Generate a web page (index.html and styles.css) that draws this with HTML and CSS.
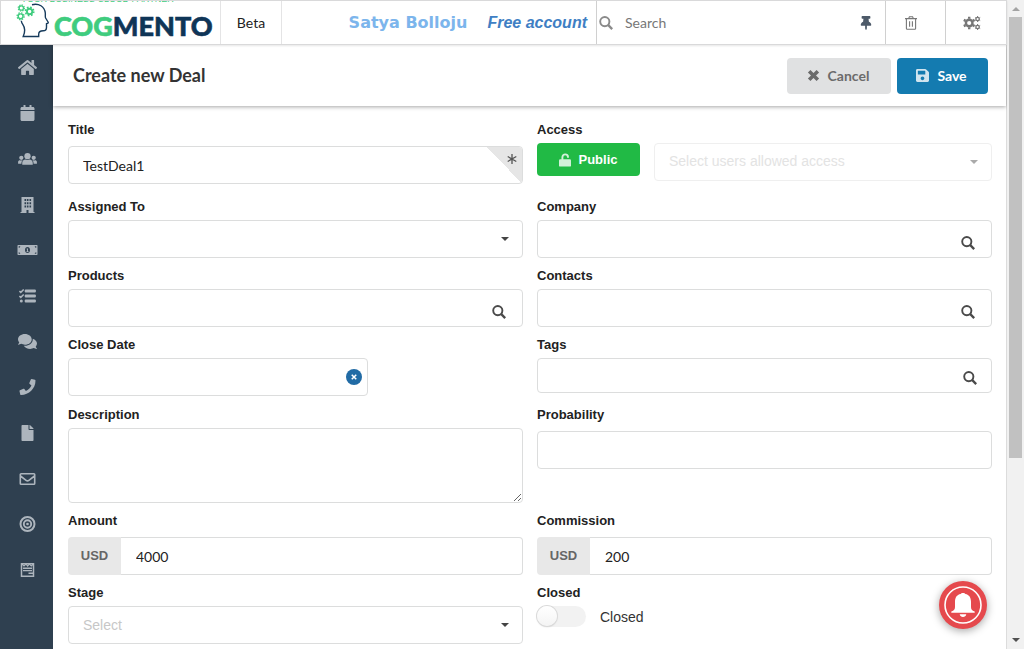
FILE: index.html
```html
<!DOCTYPE html>
<html lang="en">
<head>
<meta charset="utf-8">
<title>Cogmento CRM</title>
<link rel="stylesheet" href="styles.css">
</head>
<body>
<svg class="sprite" aria-hidden="true">
  <symbol id="i-home" viewBox="0 0 576 512"><path d="M280.37 148.26L96 300.11V464a16 16 0 0 0 16 16l112.06-.29a16 16 0 0 0 15.92-16V368a16 16 0 0 1 16-16h64a16 16 0 0 1 16 16v95.64a16 16 0 0 0 16 16.05L464 480a16 16 0 0 0 16-16V300L295.67 148.26a12.19 12.19 0 0 0-15.3 0zM571.6 251.47L488 182.56V44.05a12 12 0 0 0-12-12h-56a12 12 0 0 0-12 12v72.61L318.47 43a48 48 0 0 0-61 0L4.34 251.47a12 12 0 0 0-1.6 16.9l25.5 31A12 12 0 0 0 45.15 301l235.22-193.74a12.19 12.19 0 0 1 15.3 0L530.9 301a12 12 0 0 0 16.9-1.6l25.5-31a12 12 0 0 0-1.7-16.93z"/></symbol>
  <symbol id="i-calendar" viewBox="0 0 448 512"><path d="M12 192h424c6.600 0 12 5.400 12 12v260c0 26.500-21.500 48-48 48H48c-26.500 0-48-21.500-48-48V204c0-6.600 5.400-12 12-12zm436-44v-36c0-26.500-21.500-48-48-48h-48V12c0-6.600-5.400-12-12-12h-40c-6.600 0-12 5.400-12 12v52H160V12c0-6.600-5.400-12-12-12h-40c-6.600 0-12 5.400-12 12v52H48C21.500 64 0 85.500 0 112v36c0 6.600 5.400 12 12 12h424c6.600 0 12-5.400 12-12z"/></symbol>
  <symbol id="i-users" viewBox="0 0 21 13"><circle cx="10.500" cy="3.400" r="3.400"/><circle cx="3.800" cy="5.200" r="2.300"/><circle cx="17.200" cy="5.200" r="2.300"/><path d="M4.800 12.600v-1.800c0-2.400 1.500-3.800 3.600-3.800.7.5 1.400.7 2.100.7s1.400-.2 2.100-.7c2.100 0 3.600 1.400 3.600 3.800v1.800zM.3 11.600V9.800c0-1.400 1-2 2-2 1 .4 2 .4 3-.1-.9.900-1.400 2.300-1.400 3.900zM20.700 11.600V9.800c0-1.400-1-2-2-2-1 .4-2 .4-3-.1.9.900 1.400 2.300 1.400 3.900z"/></symbol>
  <symbol id="i-building" viewBox="0 0 14 16"><path fill-rule="evenodd" d="M1 0h12v15h1v1H8v-3H6v3H0v-1h1zM4 2v2h1.600V2zM6.400 2v2H8V2zM9 2v2h1.600V2zM4 5.200v2h1.600v-2zM6.400 5.200v2H8v-2zM9 5.200v2h1.600v-2zM4 8.400v2h1.600v-2zM6.400 8.400v2H8v-2zM9 8.400v2h1.600v-2z"/></symbol>
  <symbol id="i-money" viewBox="0 0 20 10"><path fill-rule="evenodd" d="M.5 0h19l.5.5v9l-.5.5H.5L0 9.500v-9zM1.200 1.200v1.600A1.600 1.600 0 0 0 2.800 1.200zM18.800 1.200h-1.600a1.600 1.600 0 0 0 1.600 1.600zM1.200 8.800h1.600a1.600 1.600 0 0 0-1.600-1.600zM18.800 8.800V7.200a1.600 1.600 0 0 0-1.600 1.600zM10 2C8.500 2 7.500 3.300 7.500 5S8.500 8 10 8s2.500-1.300 2.500-3S11.500 2 10 2z"/><path d="M9.200 3.500h1.300v2.700h.6V7H9v-.8h.6V4.400h-.4z"/></symbol>
  <symbol id="i-tasks" viewBox="0 0 17 14"><rect x="5.700" y=".6" width="11.200" height="2.800" rx="1"/><rect x="5.700" y="5.600" width="11.200" height="2.800" rx="1"/><rect x="5.700" y="10.600" width="11.200" height="2.800" rx="1"/><circle cx="2.300" cy="12" r="1.500"/><path d="M.4 2l1.400 1.400L4.700.5M.4 7l1.400 1.400 2.900-2.900" fill="none" stroke="currentColor" stroke-width="1.500"/></symbol>
  <symbol id="i-comments" viewBox="0 0 576 512"><path d="M416 192c0-88.4-93.1-160-208-160S0 103.6 0 192c0 34.3 14.1 65.9 38 92-13.4 30.2-35.5 54.2-35.8 54.5-2.2 2.3-2.8 5.7-1.5 8.7S4.8 352 8 352c36.6 0 66.9-12.3 88.7-25 32.2 15.7 70.3 25 111.300 25 114.900 0 208-71.600 208-160zm122 220c23.900-26 38-57.700 38-92 0-66.900-53.500-124.200-129.300-148.100.9 6.600 1.300 13.300 1.300 20.100 0 105.900-107.700 192-240 192-10.800 0-21.300-.8-31.700-1.900C207.800 439.600 281.800 480 368 480c41 0 79.100-9.200 111.300-25 21.800 12.700 52.100 25 88.700 25 3.200 0 6.100-1.900 7.300-4.800 1.300-2.900.7-6.300-1.500-8.700-.3-.3-22.400-24.200-35.800-54.500z"/></symbol>
  <symbol id="i-phone" viewBox="0 0 512 512"><path d="M493.4 24.6l-104-24c-11.3-2.6-22.9 3.3-27.5 13.9l-48 112c-4.2 9.8-1.4 21.3 6.9 28l60.6 49.6c-36 76.7-98.9 140.5-177.2 177.2l-49.6-60.6c-6.8-8.3-18.2-11.1-28-6.9l-112 48C3.9 366.5-2 378.1.6 389.4l24 104C27.1 504.2 36.7 512 48 512c256.1 0 464-207.5 464-464 0-11.2-7.7-20.9-18.6-23.4z"/></symbol>
  <symbol id="i-file" viewBox="0 0 384 512"><path d="M224 136V0H24C10.7 0 0 10.7 0 24v464c0 13.3 10.7 24 24 24h336c13.3 0 24-10.7 24-24V160H248c-13.2 0-24-10.8-24-24zm160-14.1v6.1H256V0h6.1c6.4 0 12.5 2.5 17 7l97.9 98c4.5 4.5 7 10.6 7 16.9z"/></symbol>
  <symbol id="i-mail" viewBox="0 0 16 12"><path d="M1.600.8h12.800a.8.8 0 0 1 .8.8v8.800a.8.8 0 0 1-.8.8H1.600a.8.8 0 0 1-.8-.8V1.600a.8.8 0 0 1 .8-.8zM1 3l5.600 4.300c.8.6 2 .6 2.800 0L15 3" fill="none" stroke="currentColor" stroke-width="1.600"/></symbol>
  <symbol id="i-target" viewBox="0 0 16 16"><circle cx="8" cy="8" r="7" fill="none" stroke="currentColor" stroke-width="2"/><circle cx="8" cy="8" r="3.700" fill="none" stroke="currentColor" stroke-width="1.900"/><circle cx="8" cy="8" r="1.300"/></symbol>
  <symbol id="i-form" viewBox="0 0 15 14"><path d="M1.500.8h12v12.400h-12z" fill="none" stroke="currentColor" stroke-width="1.500"/><path d="M2 1l2 2 2-2 1.700 2 1.600-2 2 2 2-2" fill="none" stroke="currentColor" stroke-width="1.200"/><path d="M3 4.600h9v1.300H3zM3 7h9v1.300H3zM8.500 9.500H13v1.600H8.500z"/></symbol>
  <symbol id="i-search" viewBox="0 0 14 14"><circle cx="5.800" cy="5.600" r="4.600" fill="none" stroke="currentColor" stroke-width="1.900"/><path d="M9 8.900l4.200 4.200" fill="none" stroke="currentColor" stroke-width="2.300"/></symbol>
  <symbol id="i-pin" viewBox="0 0 384 512"><path d="M298.028 214.267L285.793 96H328c13.255 0 24-10.745 24-24V24c0-13.255-10.745-24-24-24H56C42.745 0 32 10.745 32 24v48c0 13.255 10.745 24 24 24h42.207L85.972 214.267C37.465 236.82 0 277.261 0 328c0 13.255 10.745 24 24 24h136v104.007c0 1.242.289 2.467.845 3.578l24 48c2.941 5.882 11.364 5.893 14.311 0l24-48a8.008 8.008 0 0 0 .845-3.578V352h136c13.255 0 24-10.745 24-24-.001-51.183-37.983-91.42-85.973-113.733z"/></symbol>
  <symbol id="i-trash" viewBox="0 0 12 14"><path d="M0 2.600h12M3.600 2.600L4.400.7h3.200l.8 1.900M1.400 2.800v9.700c0 .5.300.8.800.8h7.600c.5 0 .8-.3.800-.8V2.800M4.600 5.300v5.400M7.400 5.300v5.400" fill="none" stroke="currentColor" stroke-width="1.100"/></symbol>
  <symbol id="i-cogs" viewBox="0 0 18 14"><g fill="none" stroke="currentColor"><circle cx="6.200" cy="7" r="3.300" stroke-width="2.400"/><path d="M6.200.8v2M6.200 11.200v2M.8 3.900l1.800 1M9.800 9.100l1.800 1M.8 10.100l1.800-1M9.800 4.900l1.800-1" stroke-width="2.400"/><circle cx="14.600" cy="3" r="1.700" stroke-width="1.300"/><circle cx="14.600" cy="11" r="1.700" stroke-width="1.300"/><path d="M14.600 0v1M14.600 5v1M12 1.500l.8.500M17.200 1.500l-.8.500M12 4.500l.8-.5M17.200 4.500l-.8-.5M14.600 8v1M14.600 13v1M12 9.500l.8.500M17.200 9.500l-.8.500M12 12.500l.8-.5M17.200 12.500l-.8-.5" stroke-width="1"/></g></symbol>
  <symbol id="i-times" viewBox="0 0 12 12"><path d="M2 2l8 8M10 2l-8 8" fill="none" stroke="currentColor" stroke-width="3.300"/></symbol>
  <symbol id="i-save" viewBox="0 32 448 448"><path d="M433.941 129.941l-83.882-83.882A48 48 0 0 0 316.118 32H48C21.490 32 0 53.490 0 80v352c0 26.510 21.490 48 48 48h352c26.510 0 48-21.490 48-48V163.882a48 48 0 0 0-14.059-33.941zM224 416c-35.346 0-64-28.654-64-64 0-35.346 28.654-64 64-64s64 28.654 64 64c0 35.346-28.654 64-64 64zm96-304.520V212c0 6.627-5.373 12-12 12H76c-6.627 0-12-5.373-12-12V108c0-6.627 5.373-12 12-12h228.520c3.183 0 6.235 1.264 8.485 3.515l3.480 3.480A11.996 11.996 0 0 1 320 111.480z"/></symbol>
  <symbol id="i-unlock" viewBox="0 0 12 14"><path d="M3.400 7V4.200a2.800 2.800 0 0 1 5.600 0v.6" fill="none" stroke="currentColor" stroke-width="1.900"/><rect y="6.200" width="12" height="7.400" rx="1.200"/></symbol>
  <symbol id="i-caret" viewBox="0 0 8 4"><path d="M0 0h8L4 4z"/></symbol>
  <symbol id="i-asterisk" viewBox="0 0 10 10"><path d="M5 0v10M.7 2.500l8.600 5M.7 7.500l8.600-5" fill="none" stroke="currentColor" stroke-width="1.300"/></symbol>
</svg>

<div class="window">
  <div class="page">
    <header class="topbar">
      <a class="logo" href="#" aria-label="Cogmento">
        <svg width="219" height="43" viewBox="1 1 219 43">
          <text class="tagline" x="21" y="2">YOUR BUSINESS CLOUD PARTNER</text>
          <path d="M32 4.700C39 3 44.500 6.500 45.300 13c.2 2-.3 3.600.3 5l2.600 4.200c.3.700-.1 1-1.700 1.500v3.500c0 2.600-1.300 3.600-3.300 3.600-3.200 0-4.500.8-4.500 3.500v2.200H23.200c2-4.500 2-8.500-.3-11.800-1-1.500-1.500-2.600-1.600-4" fill="none" stroke="#173b5c" stroke-width="1.400"/>
          <g fill="none" stroke="#3fcc7e">
            <circle cx="21.300" cy="8" r="2.200" stroke-width="1.300"/><circle cx="21.300" cy="8" r="3.100" stroke-width="1.200" stroke-dasharray="1.300 1.130"/>
            <circle cx="29.600" cy="11.400" r="2.700" stroke-width="1.900"/><circle cx="29.600" cy="11.400" r="4.200" stroke-width="1.600" stroke-dasharray="1.700 1.600"/>
            <circle cx="20.600" cy="16.300" r="2.400" stroke-width="1.400"/><circle cx="20.600" cy="16.300" r="3.500" stroke-width="1.300" stroke-dasharray="1.500 1.250"/>
          </g>
          <text class="wordmark" x="54" y="36"><tspan class="green">COG</tspan><tspan class="navy">MENTO</tspan></text>
        </svg>
      </a>
      <span class="beta">Beta</span>
      <div class="account"><span class="user">Satya Bolloju</span><span class="plan">Free account</span></div>
      <div class="search">
        <svg class="ico-search"><use href="#i-search"/></svg>
        <input type="text" placeholder="Search" aria-label="Search">
        <button class="pin" type="button" aria-label="Pin"><svg><use href="#i-pin"/></svg></button>
      </div>
      <button class="tool trash" type="button" aria-label="Trash"><svg><use href="#i-trash"/></svg></button>
      <button class="tool cogs" type="button" aria-label="Settings"><svg><use href="#i-cogs"/></svg></button>
    </header>

    <div class="body">
      <nav class="sidebar">
        <a href="#" aria-label="Home"><svg class="w19"><use href="#i-home"/></svg></a>
        <a href="#" aria-label="Calendar"><svg><use href="#i-calendar"/></svg></a>
        <a href="#" aria-label="Contacts"><svg class="w21 h12"><use href="#i-users"/></svg></a>
        <a href="#" aria-label="Companies"><svg><use href="#i-building"/></svg></a>
        <a href="#" aria-label="Deals"><svg class="w21 h10"><use href="#i-money"/></svg></a>
        <a href="#" aria-label="Tasks"><svg class="h14"><use href="#i-tasks"/></svg></a>
        <a href="#" aria-label="Cases"><svg class="w19"><use href="#i-comments"/></svg></a>
        <a href="#" aria-label="Calls"><svg><use href="#i-phone"/></svg></a>
        <a href="#" aria-label="Documents"><svg><use href="#i-file"/></svg></a>
        <a href="#" aria-label="Email"><svg class="h12"><use href="#i-mail"/></svg></a>
        <a href="#" aria-label="Campaigns"><svg><use href="#i-target"/></svg></a>
        <a href="#" aria-label="Forms"><svg class="h14"><use href="#i-form"/></svg></a>
      </nav>

      <main class="main">
        <div class="heading">
          <h1>Create new Deal</h1>
          <button class="btn cancel" type="button"><svg><use href="#i-times"/></svg>Cancel</button>
          <button class="btn save" type="submit" form="deal"><svg><use href="#i-save"/></svg>Save</button>
        </div>

        <form class="form" id="deal">
          <div class="field loose first">
            <label for="title">Title</label>
            <div class="control"><input id="title" type="text" value="TestDeal1"><span class="corner"></span><svg class="star"><use href="#i-asterisk"/></svg></div>
          </div>
          <div class="field">
            <label for="users">Access</label>
            <div class="access">
              <button class="public" type="button"><svg><use href="#i-unlock"/></svg>Public</button>
              <div class="control disabled"><select id="users" disabled><option>Select users allowed access</option></select><svg class="caret"><use href="#i-caret"/></svg></div>
            </div>
          </div>

          <div class="field">
            <label for="assigned">Assigned To</label>
            <div class="control"><select id="assigned"><option></option></select><svg class="caret"><use href="#i-caret"/></svg></div>
          </div>
          <div class="field">
            <label for="company">Company</label>
            <div class="control"><input id="company" type="text"><svg class="find"><use href="#i-search"/></svg></div>
          </div>

          <div class="field">
            <label for="products">Products</label>
            <div class="control"><input id="products" type="text"><svg class="find"><use href="#i-search"/></svg></div>
          </div>
          <div class="field">
            <label for="contacts">Contacts</label>
            <div class="control"><input id="contacts" type="text"><svg class="find"><use href="#i-search"/></svg></div>
          </div>

          <div class="field">
            <label for="close">Close Date</label>
            <div class="control date"><input id="close" type="text"><button class="clear" type="button" aria-label="Clear date"><svg viewBox="0 0 8 8"><path d="M1 1l6 6M7 1L1 7" fill="none" stroke="currentColor" stroke-width="2"/></svg></button></div>
          </div>
          <div class="field">
            <label for="tags">Tags</label>
            <div class="control tags"><input id="tags" type="text"><svg class="find"><use href="#i-search"/></svg></div>
          </div>

          <div class="field">
            <label for="description">Description</label>
            <textarea id="description"></textarea>
          </div>
          <div class="field loose">
            <label for="probability">Probability</label>
            <div class="control"><input id="probability" type="text"></div>
          </div>

          <div class="field loose">
            <label for="amount">Amount</label>
            <div class="control money"><span class="unit">USD</span><input id="amount" type="text" value="4000"></div>
          </div>
          <div class="field loose">
            <label for="commission">Commission</label>
            <div class="control money"><span class="unit">USD</span><input id="commission" type="text" value="200"></div>
          </div>

          <div class="field">
            <label for="stage">Stage</label>
            <div class="control"><select id="stage" class="empty"><option>Select</option></select><svg class="caret"><use href="#i-caret"/></svg></div>
          </div>
          <div class="field">
            <label for="closed">Closed</label>
            <div class="toggle"><input id="closed" type="checkbox"><label for="closed">Closed</label></div>
          </div>
        </form>
      </main>
    </div>
  </div>

  <div class="scroll" aria-hidden="true">
    <svg class="arrow up" viewBox="0 0 8 4"><path d="M0 4h8L4 0z"/></svg>
    <div class="thumb"></div>
    <svg class="arrow down" viewBox="0 0 8 4"><path d="M0 0h8L4 4z"/></svg>
  </div>
</div>

<button class="bell" type="button" aria-label="Notifications">
  <svg viewBox="0 0 48 48"><circle cx="24" cy="24" r="18" fill="none" stroke="#fff" stroke-width="1.600"/><path d="M24 12c1.200 0 2 .4 2.300 1 4 .6 5.700 3.700 5.700 7.800v5.200c0 2.300.9 3.600 3.700 4.500v1.300H12.300v-1.300c2.800-.9 3.700-2.200 3.700-4.500v-5.200c0-4.100 1.700-7.200 5.700-7.800.3-.6 1.100-1 2.300-1zM20.700 33.300h6.600c-.4 1.700-1.600 2.700-3.300 2.700s-2.900-1-3.300-2.700z" fill="#fff"/></svg>
</button>
</body>
</html>
```

FILE: styles.css
```css
* { box-sizing: border-box; }

body {
  margin: 0;
  font-family: Lato, "Liberation Sans", sans-serif;
  font-size: 14px;
  color: #222;
  background: #fff;
}

button, input, select, textarea { font: inherit; color: inherit; }
button { cursor: pointer; }
svg { fill: currentColor; }
.sprite { display: none; }

.window { display: flex; height: 100vh; overflow: hidden; }
.page { flex: 1; min-width: 0; display: flex; flex-direction: column; }

/* Top bar */
.topbar {
  display: flex;
  flex: none;
  height: 45px;
  border: 1px solid #d9d9da;
  position: relative;
  z-index: 2;
  box-shadow: 0 1px 2px rgba(0, 0, 0, 0.1);
  background: #fff;
}
.logo { display: block; width: 219px; height: 43px; overflow: hidden; }
.logo svg { display: block; }
.wordmark { font: 900 27px Lato, sans-serif; stroke-width: 0.6px; }
.green { fill: #3fcc7e; stroke: #3fcc7e; }
.navy { fill: #0f3557; stroke: #0f3557; }
.tagline { font: 9px "Liberation Sans", sans-serif; fill: #3fcc7e; }
.beta {
  display: flex;
  align-items: center;
  justify-content: center;
  width: 62px;
  border: solid #e4e4e5;
  border-width: 0 1px;
}
.account {
  flex: 1;
  display: flex;
  align-items: center;
  justify-content: flex-end;
  gap: 20px;
  padding-right: 9px;
  font-family: "Liberation Sans", sans-serif;
}
.user { font: bold 16px "DejaVu Sans", sans-serif; color: #7cb5ec; }
.plan { font-size: 16px; font-weight: bold; font-style: italic; color: #3f7fc4; }
.search {
  display: flex;
  align-items: center;
  width: 289px;
  border-left: 1px solid #d0d0d0;
  padding: 0 12px 0 2px;
}
.search svg { width: 14px; height: 14px; color: #8a8a8a; flex: none; }
.search input {
  flex: 1;
  min-width: 0;
  border: 0;
  outline: 0;
  padding: 0 0 0 12px;
  background: none;
}
.search input::placeholder { color: #777; opacity: 1; }
.pin, .tool { border: 0; background: none; padding: 0; }
.search .pin svg { display: block; width: 14px; color: #4d5a69; }
.tool {
  display: flex;
  align-items: center;
  width: 60px;
  border-left: 1px solid #d0d0d0;
  color: #777;
}
.tool.cogs { width: 61px; }
.trash svg { width: 12px; height: 14px; margin-left: 19px; }
.cogs svg { width: 18px; height: 14px; margin-left: 17px; }

/* Body */
.body { flex: 1; min-height: 0; display: flex; }
.sidebar {
  flex: none;
  width: 53px;
  background: #2f4050;
  color: #adb5bd;
  display: grid;
  grid-auto-rows: 1fr;
  align-self: stretch;
  padding-bottom: 56px;
}
.sidebar a { display: flex; align-items: center; justify-content: center; color: inherit; padding-left: 2px; }
.sidebar svg { width: 17px; height: 16px; }
.sidebar .w19 { width: 19px; height: 17px; }
.sidebar .w21 { width: 21px; }
.sidebar .h10 { height: 10px; }
.sidebar .h12 { height: 12px; }
.sidebar .h14 { height: 14px; }

.main { flex: 1; min-width: 0; border: solid #dcdcdc; border-width: 0 1px 0 0; }
.heading {
  display: flex;
  align-items: center;
  gap: 6px;
  height: 61px;
  padding: 0 18px 0 20px;
  box-shadow: 0 1px 4px rgba(0, 0, 0, 0.35);
}
.heading h1 { flex: 1; margin: 0; padding-bottom: 2px; font-size: 18px; font-weight: bold; color: #333; }
.btn {
  display: flex;
  align-items: center;
  justify-content: center;
  gap: 8px;
  height: 36px;
  border: 0;
  border-radius: 4px;
  padding: 0 2px 0 0;
  font-weight: bold;
}
.btn svg { width: 13px; height: 13px; }
.cancel { width: 104px; background: #e0e1e2; color: #6b6b6b; }
.save { width: 91px; background: #147bb0; color: #fff; }
.save svg, .public svg { opacity: 0.8; }

/* Form */
.form {
  display: grid;
  grid-template-columns: 1fr 1fr;
  gap: 8px 14px;
  padding: 14px 14px 0 15px;
}
.field { display: flex; flex-direction: column; gap: 3px; min-width: 0; }
.field.loose { gap: 6px; }
.field.first { padding-bottom: 5px; }
.field > label {
  font: bold 13px/20px "Liberation Sans", sans-serif;
  color: #222;
}
.control { display: flex; position: relative; }
.control input, .control select, .field textarea {
  width: 100%;
  min-width: 0;
  height: 38px;
  border: 1px solid #dcdddd;
  border-radius: 4px;
  padding: 0 14px;
  background: #fff;
  outline: 0;
}
.control select { appearance: none; font-family: "Liberation Sans", sans-serif; opacity: 1; }
.control .empty { color: #c7c7c7; }
.field textarea { display: block; height: 75px; resize: vertical; }
.control.tags input { height: 35px; }
.control.date { width: 300px; margin-bottom: 1px; }

.caret { position: absolute; right: 14px; top: 17px; width: 8px; height: 4px; color: #444; }
.find { position: absolute; right: 17px; top: 16px; width: 14px; height: 14px; color: #4a4a4a; }
.tags .find { top: 13px; right: 15px; }
.corner {
  position: absolute;
  top: 1px;
  right: 1px;
  width: 36px;
  height: 36px;
  border-radius: 0 3px 3px 0;
  background: linear-gradient(to top right, transparent 50%, #e6e6e6 50%);
}
.star { position: absolute; top: 8px; right: 6px; width: 10px; height: 10px; color: #555; }
.clear {
  position: absolute;
  top: 11px;
  right: 6px;
  display: flex;
  align-items: center;
  justify-content: center;
  width: 16px;
  height: 16px;
  padding: 0;
  border: 0;
  border-radius: 50%;
  background: #216ba5;
  color: #fff;
}
.clear svg { width: 6px; height: 6px; }

.access { display: flex; align-items: flex-start; gap: 14px; }
.access .control { flex: 1; }
.access select { border-color: #efefef; color: #e3e3e3; padding-bottom: 2px; }
.access .caret { color: #aaa; }
.public {
  display: flex;
  align-items: center;
  justify-content: center;
  gap: 7px;
  width: 103px;
  height: 33px;
  padding: 0;
  border: 0;
  border-radius: 4px;
  background: #21ba45;
  color: #fff;
  font: bold 13px "Liberation Sans", sans-serif;
}
.public svg { width: 12px; height: 14px; }

.unit {
  display: flex;
  align-items: center;
  justify-content: center;
  flex: none;
  width: 53px;
  padding-bottom: 2px;
  border-radius: 4px 0 0 4px;
  background: #e8e8e8;
  color: #666;
  font: bold 13px "Liberation Sans", sans-serif;
}
.money input { border-left: 0; border-radius: 0 4px 4px 0; padding-left: 15px; }

.toggle { display: flex; align-items: center; gap: 14px; font-family: "Liberation Sans", sans-serif; color: #333; }
.toggle input {
  appearance: none;
  width: 49px;
  height: 21px;
  margin: 0;
  border-radius: 11px;
  background: #f2f2f2;
}
.toggle input::before {
  content: "";
  display: block;
  width: 20px;
  height: 20px;
  border-radius: 50%;
  background: linear-gradient(#fff, #f4f4f4);
  box-shadow: 0 0 0 1px #dadada, 0 1px 2px rgba(0, 0, 0, 0.15);
}

/* Scroll bar */
.scroll {
  flex: none;
  display: flex;
  flex-direction: column;
  align-items: center;
  width: 17px;
  background: #f1f1f1;
}
.arrow { width: 8px; height: 4px; margin: 7px 0 6px; flex: none; }
.up { color: #a3a3a3; }
.down { color: #505050; margin: auto 0 7px; }
.thumb { width: 13px; height: 68%; background: #c1c1c1; }

.bell {
  position: fixed;
  right: 37px;
  bottom: 20px;
  width: 48px;
  height: 48px;
  padding: 0;
  border: 0;
  border-radius: 50%;
  background: #e5494d;
  box-shadow: 0 2px 8px rgba(0, 0, 0, 0.35);
}
.bell svg { display: block; width: 48px; height: 48px; }
```
